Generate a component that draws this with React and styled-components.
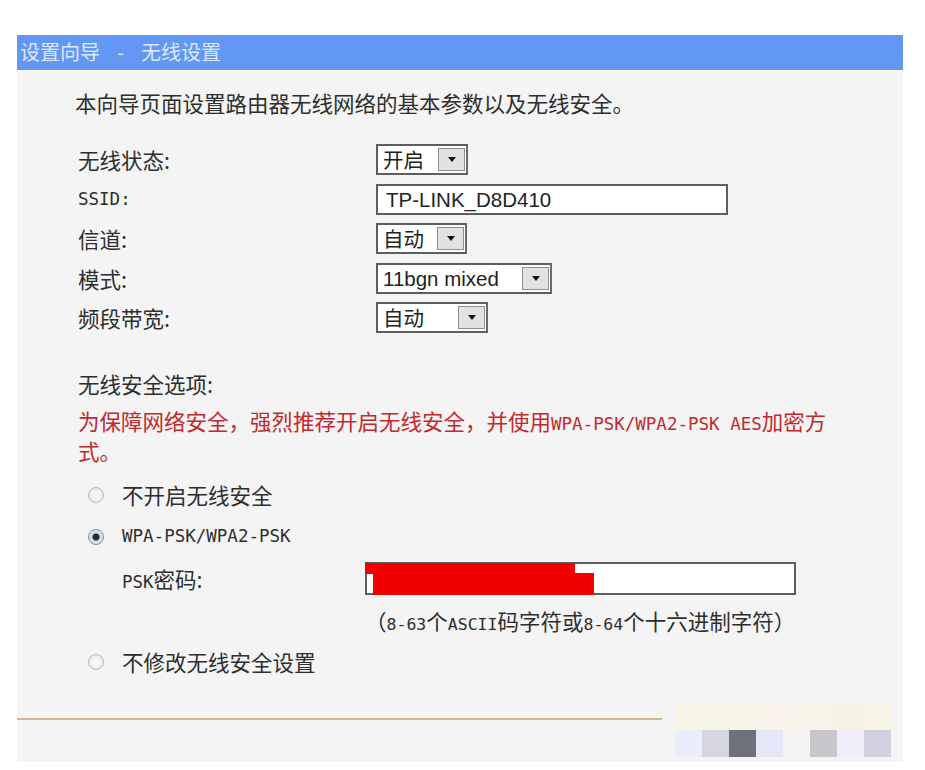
import styled, { createGlobalStyle } from 'styled-components';

const GlobalStyle = createGlobalStyle`
  body {
    margin: 0;
    background: #ffffff;
    font-family: "Noto Sans CJK SC", "Liberation Sans", sans-serif;
  }
`;

const Page = styled.div`
  padding: 35px 0 0 17px;
  width: 886px;
`;

const Header = styled.div`
  height: 35px;
  background: #6297f4;
  color: #dfe9fc;
  font-size: 20px;
  line-height: 33px;
  padding-left: 3px;
`;

const Dash = styled.span`
  margin: 0 17px;
`;

const Body = styled.div`
  position: relative;
  background: #f4f4f4;
  border-top: 3px solid #f9f8f1;
  height: 692px;
  box-sizing: border-box;
  padding: 15px 0 0 58px;
  color: #2e2e2e;
  font-size: 21.5px;
`;

const Intro = styled.div`
  line-height: 30px;
`;

const Mono = styled.span`
  font-family: "DejaVu Sans Mono", "Liberation Mono", monospace;
  font-size: ${(p) => p.$size || 17.5}px;
  line-height: 1;
`;

const Form = styled.div`
  margin: 22px 0 0 3px;
`;

const Row = styled.div`
  display: grid;
  grid-template-columns: 298px auto;
  align-items: center;
  height: 39.5px;
`;

const Select = styled.div`
  display: flex;
  width: ${(p) => p.$w}px;
  height: 31px;
  box-sizing: border-box;
  border: 2px solid #5e5e5e;
  border-right-color: #6a6a6a;
  background: #fff;
`;

const SelectText = styled.div`
  flex: 1;
  padding-left: 5px;
  font-size: 20.5px;
  line-height: 27px;
  color: #222;
  font-family: ${(p) => (p.$latin ? '"Liberation Sans", sans-serif' : 'inherit')};
`;

const ArrowBtn = styled.div`
  width: 25px;
  margin: 2px 1px 2px 0;
  background: #e2e2e4;
  border: 1px solid #8d8d8d;
  display: flex;
  align-items: center;
  justify-content: center;

  &::after {
    content: '';
    border-left: 4px solid transparent;
    border-right: 4px solid transparent;
    border-top: 5px solid #111;
  }
`;

const TextInput = styled.div`
  width: ${(p) => p.$w}px;
  height: ${(p) => p.$h || 31}px;
  box-sizing: border-box;
  border: 2px solid #5e5e5e;
  background: #fff;
  padding-left: 8px;
  font-family: "Liberation Sans", sans-serif;
  font-size: 20.5px;
  line-height: 27px;
  color: #222;
  position: relative;
`;

const SectionTitle = styled.div`
  margin: 31px 0 0 3px;
  line-height: 30px;
`;

const Warning = styled.div`
  margin: 7px 0 0 3px;
  width: 762px;
  line-height: 30px;
  color: #c3282c;
`;

const Options = styled.div`
  margin: 8px 0 0 5px;
`;

const OptionRow = styled.div`
  display: flex;
  align-items: center;
  height: 42px;
  gap: 18px;
`;

const Radio = styled.span`
  width: 16px;
  height: 16px;
  border-radius: 50%;
  box-sizing: border-box;
  border: 1px solid ${(p) => (p.$on ? '#7d8ea6' : '#b9b9b9')};
  background: ${(p) =>
    p.$on
      ? 'radial-gradient(circle, #1f2c3c 0 3px, #cfd8e6 4px, #eef1f6 100%)'
      : 'radial-gradient(circle, #f6f6f6 0 3px, #e2e2e2 100%)'};
  margin-left: 8px;
`;

const PskRow = styled.div`
  display: grid;
  grid-template-columns: 243px auto;
  align-items: center;
  height: 42px;
  padding-left: 42px;
`;

const Redact = styled.div`
  position: absolute;
  background: #f00000;
  left: ${(p) => p.$l}px;
  top: ${(p) => p.$t}px;
  width: ${(p) => p.$w}px;
  height: ${(p) => p.$h}px;
`;

const Hint = styled.div`
  padding-left: 285px;
  height: 41px;
  line-height: 41px;
`;

const BottomLine = styled.div`
  position: absolute;
  left: 0;
  top: 645px;
  width: 645px;
  height: 2px;
  background: #d2b597;
  box-shadow: 0 -2px 4px #fbf1e2;
`;

const Noise = styled.div`
  position: absolute;
  left: 658px;
  top: 630px;
  display: grid;
  grid-template-columns: repeat(8, 27px);
  grid-auto-rows: 27px;
`;

const Cell = styled.div`
  background: ${(p) => p.$c};
`;

const noiseColors = [
  '#f6f5e6', '#f6f4e6', '#f7f4e8', '#faf4ea', '#f8f4ea', '#f6f4e6', '#f6f3e4', '#f8f4e6',
  '#eaeefa', '#d5d6e2', '#6e707c', '#e3e7f7', '#f4f4f4', '#c8c8cc', '#efeefa', '#d2d1e0',
];

const App = () => {
  return (
    <Page>
      <GlobalStyle />
      <Header>
        设置向导<Dash>-</Dash>无线设置
      </Header>
      <Body>
        <Intro>本向导页面设置路由器无线网络的基本参数以及无线安全。</Intro>
        <Form>
          <Row>
            <span>无线状态:</span>
            <Select $w={92}>
              <SelectText>开启</SelectText>
              <ArrowBtn />
            </Select>
          </Row>
          <Row>
            <Mono>SSID:</Mono>
            <TextInput $w={352}>TP-LINK_D8D410</TextInput>
          </Row>
          <Row>
            <span>信道:</span>
            <Select $w={91}>
              <SelectText>自动</SelectText>
              <ArrowBtn />
            </Select>
          </Row>
          <Row>
            <span>模式:</span>
            <Select $w={176}>
              <SelectText $latin>11bgn mixed</SelectText>
              <ArrowBtn />
            </Select>
          </Row>
          <Row>
            <span>频段带宽:</span>
            <Select $w={112}>
              <SelectText>自动</SelectText>
              <ArrowBtn />
            </Select>
          </Row>
        </Form>

        <SectionTitle>无线安全选项:</SectionTitle>
        <Warning>
          为保障网络安全，强烈推荐开启无线安全，并使用<Mono>WPA-PSK/WPA2-PSK AES</Mono>加密方式。
        </Warning>

        <Options>
          <OptionRow>
            <Radio />
            <span>不开启无线安全</span>
          </OptionRow>
          <OptionRow>
            <Radio $on />
            <Mono $size={17.5}>WPA-PSK/WPA2-PSK</Mono>
          </OptionRow>
          <PskRow>
            <span>
              <Mono>PSK</Mono>密码:
            </span>
            <TextInput $w={431} $h={33}>
              <Redact $l={-2} $t={-1} $w={210} $h={11} />
              <Redact $l={6} $t={9} $w={221} $h={22} />
            </TextInput>
          </PskRow>
          <Hint>
            （<Mono $size={16.5}>8-63</Mono>个<Mono $size={16.5}>ASCII</Mono>码字符或
            <Mono $size={16.5}>8-64</Mono>个十六进制字符）
          </Hint>
          <OptionRow>
            <Radio />
            <span>不修改无线安全设置</span>
          </OptionRow>
        </Options>

        <BottomLine />
        <Noise>
          {noiseColors.map((c, i) => (
            <Cell key={i} $c={c} />
          ))}
        </Noise>
      </Body>
    </Page>
  );
};

export default App;
